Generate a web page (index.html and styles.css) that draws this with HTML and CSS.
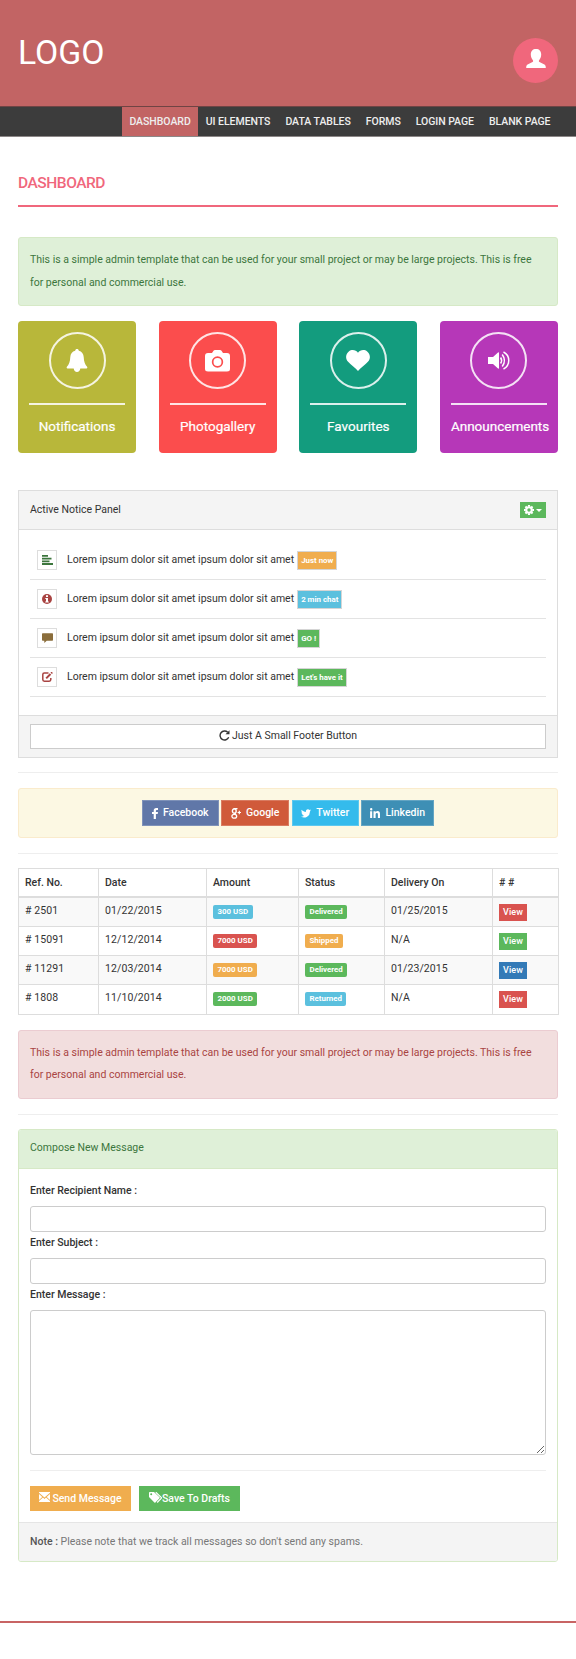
FILE: index.html
```html
<!DOCTYPE html>
<html lang="en">
<head>
<meta charset="utf-8">
<title>Dashboard</title>
<link rel="stylesheet" href="styles.css">
</head>
<body>
<header class="header">
  <a class="logo">LOGO</a>
  <a class="user"><svg viewBox="0 0 20 19" width="20" height="19"><path fill="#fff" d="M10 0c3.200 0 5.200 2 5.200 5.600 0 2.400-.9 4.300-2.100 5.600-.4.500-.3 1.500.4 1.900l4.900 2.500c1 .6 1.400 1.400 1.400 3.400H.2c0-2 .4-2.800 1.400-3.400l4.900-2.500c.7-.4.800-1.400.4-1.900-1.200-1.300-2.100-3.200-2.100-5.600C4.800 2 6.800 0 10 0z"/></svg></a>
</header>
<nav class="menu">
  <a class="menu-item active">DASHBOARD</a><a class="menu-item">UI ELEMENTS</a><a class="menu-item">DATA TABLES</a><a class="menu-item">FORMS</a><a class="menu-item">LOGIN PAGE</a><a class="menu-item">BLANK PAGE</a>
</nav>
<main class="content">
  <h4 class="page-title">DASHBOARD</h4>
  <div class="alert success">This is a simple admin template that can be used for your small project or may be large projects. This is free<br>for personal and commercial use.</div>

  <section class="cards">
    <div class="card olive"><span class="ring"><svg viewBox="0 0 22 23" width="22" height="23"><path fill="#fff" d="M11 0c1 0 1.700.7 1.800 1.700 3 .8 4.700 3 4.900 6.300.2 4.800 1.300 7.600 3.400 9.800.5.600.3 1.700-.6 1.700h-6.200C14 21.500 12.800 23 11 23s-3-1.500-3.300-3.500H1.500c-.9 0-1.100-1.100-.6-1.700C3 15.600 4.100 12.800 4.300 8c.2-3.300 1.900-5.500 4.900-6.300C9.300.7 10 0 11 0z"/></svg></span><hr><h5>Notifications</h5></div>
    <div class="card red"><span class="ring"><svg viewBox="0 0 25 22" width="25" height="22"><path fill="#fff" fill-rule="evenodd" d="M3 3h4l1.500-2.300Q9 0 10 0h5q1 0 1.500.7L18 3h4q3 0 3 3v13q0 2.500-3 2.500H3Q0 21.500 0 19V6q0-3 3-3zM12.500 6.300a5.700 5.700 0 1 0 0 11.400a5.700 5.700 0 1 0 0-11.400zm0 1.700a4 4 0 1 1 0 8a4 4 0 1 1 0-8z"/></svg></span><hr><h5>Photogallery</h5></div>
    <div class="card teal"><span class="ring"><svg viewBox="0 0 24 21" width="24" height="21"><path fill="#fff" d="M12 2.800C14-.2 18.400-.8 21.200 1.500c3.300 2.600 3.600 7.200.7 10.300C19.200 14.800 14.900 17.700 12 21 9.100 17.700 4.800 14.800 2.100 11.800-.8 8.700-.5 4.100 2.800 1.500 5.600-.8 10-.2 12 2.800z"/></svg></span><hr><h5>Favourites</h5></div>
    <div class="card purple"><span class="ring"><svg viewBox="0 0 22 19" width="22" height="19"><path fill="#fff" d="M0 6h5l5-4.500Q11 1 11 2v15q0 1-1 .5L5 13H0z"/><g fill="none" stroke="#fff" stroke-width="1.500"><path d="M12.600 6.500q2 3 0 6"/><path d="M14.200 3.500q4.500 6 0 12"/><path d="M15.500 1c7 3.500 7 13.500 0 17"/></g></svg></span><hr><h5>Announcements</h5></div>
  </section>

  <section class="panel notice">
    <div class="panel-heading">Active Notice Panel
      <button class="gear"><svg viewBox="0 0 9 9" width="10" height="10"><circle cx="4.500" cy="4.500" r="2.500" fill="none" stroke="#fff" stroke-width="1.900"/><path stroke="#fff" stroke-width="1.900" d="M4.500 0v1.500M4.500 7.500V9M0 4.500h1.500M7.500 4.500H9M1.300 1.300l1.100 1.100M6.600 6.600l1.100 1.100M1.300 7.700l1.100-1.100M6.600 2.400l1.100-1.100"/></svg><i class="caret"></i></button>
    </div>
    <ul class="notices">
      <li><span class="icon"><svg viewBox="0 0 11 10" width="11" height="10"><path fill="#3c763d" d="M0 0h6v1.800H0zM0 2.700h9.500v1.800H0zM0 5.400h7.500v1.800H0zM0 8.100h11v1.800H0z"/></svg></span><span class="text">Lorem ipsum dolor sit amet ipsum dolor sit amet</span><span class="tag orange">Just now</span></li>
      <li><span class="icon"><svg viewBox="0 0 10 10" width="10" height="10"><circle cx="5" cy="5" r="5" fill="#a94442"/><path fill="#fff" d="M4 1.300h2v1.800H4zM3.300 4.100H6v3.500h.8v1H3.200v-1H4V5.100h-.7z"/></svg></span><span class="text">Lorem ipsum dolor sit amet ipsum dolor sit amet</span><span class="tag blue">2 min chat</span></li>
      <li><span class="icon"><svg viewBox="0 0 11 10" width="11" height="10"><path fill="#8a6d3b" d="M.7.3h9.600q.7 0 .7.700v6q0 .7-.7.700H4.700L2.300 10V7.700H.7Q0 7.700 0 7V1Q0 .3.700.3z"/></svg></span><span class="text">Lorem ipsum dolor sit amet ipsum dolor sit amet</span><span class="tag green">GO !</span></li>
      <li><span class="icon"><svg viewBox="0 0 11 10" width="11" height="10"><g fill="none" stroke="#a94442"><path stroke-width="1.500" d="M6.500 1H2.300Q.8 1 .8 2.500v5Q.8 9.200 2.300 9.200h4.900Q8.800 9.200 8.800 7.500V6"/><path stroke-width="2" d="M4.200 6.400L8.500 2M9.200 1.300l1-1"/></g></svg></span><span class="text">Lorem ipsum dolor sit amet ipsum dolor sit amet</span><span class="tag green">Let's have it</span></li>
    </ul>
    <div class="panel-footer"><button class="wide"><svg viewBox="0 0 11 11" width="11" height="11"><path fill="none" stroke="#333" stroke-width="1.400" d="M8.700 2.200A4.500 4.500 0 1 0 9.700 7.300"/><path fill="#333" d="M10.500.3v4H6.500z"/></svg><span>Just A Small Footer Button</span></button></div>
  </section>

  <hr class="rule before-social">
  <div class="social">
    <a class="facebook"><svg viewBox="0 0 6 11" width="6" height="11"><path fill="#fff" d="M6 .1v1.800H4.800Q3.900 1.900 3.900 2.800V4H6l-.3 2H3.900v5H1.700V6H0V4h1.700V2.500Q1.700 0 4.200 0z"/></svg>Facebook</a>
    <a class="google"><svg viewBox="0 0 10 11" width="10" height="11"><g fill="none" stroke="#fff"><ellipse cx="3.300" cy="3" rx="1.900" ry="2.200" stroke-width="1.400"/><ellipse cx="3.300" cy="8.300" rx="2.400" ry="1.900" stroke-width="1.300"/><path stroke-width="1.200" d="M3 .6h3.500M3.600 5l1.500 1.800M6.600 4.500H10M8.300 2.800v3.400"/></g></svg>Google</a>
    <a class="twitter"><svg viewBox="0 0 24 20" width="10" height="9"><path fill="#fff" d="M24 2.400c-.9.400-1.800.7-2.800.8 1-.6 1.800-1.600 2.200-2.700-1 .6-2 1-3.100 1.200a4.900 4.900 0 0 0-8.400 4.500C7.800 6 4.200 4 1.700.9.400 3.100 1 6 3.200 7.500c-.8 0-1.600-.2-2.200-.6 0 2.300 1.600 4.400 3.900 4.900-.7.200-1.500.2-2.200.1.600 2 2.400 3.400 4.600 3.400A9.900 9.900 0 0 1 0 17.300 14 14 0 0 0 21.500 4.900c1-.7 1.800-1.600 2.500-2.500z"/></svg>Twitter</a>
    <a class="linkedin"><svg viewBox="0 0 10 10" width="10" height="10"><path fill="#fff" d="M.1 3.300h2.100V10H.1zM1.200 0a1.200 1.200 0 1 1 0 2.400a1.200 1.200 0 1 1 0-2.400zM3.500 3.300h2.100v1Q6.300 3.100 7.600 3.100 10 3.100 10 6.200V10H7.900V6.400Q7.900 5 6.900 5 5.700 5 5.600 6.400V10H3.500z"/></svg>Linkedin</a>
  </div>
  <hr class="rule tight">

  <table class="orders">
    <colgroup><col class="c1"><col class="c2"><col class="c3"><col class="c4"><col class="c5"><col class="c6"></colgroup>
    <thead><tr><th>Ref. No.</th><th>Date</th><th>Amount</th><th>Status</th><th>Delivery On</th><th># #</th></tr></thead>
    <tbody>
      <tr><td># 2501</td><td>01/22/2015</td><td><span class="label blue">300 USD</span></td><td><span class="label green">Delivered</span></td><td>01/25/2015</td><td><a class="view danger">View</a></td></tr>
      <tr><td># 15091</td><td>12/12/2014</td><td><span class="label danger">7000 USD</span></td><td><span class="label orange">Shipped</span></td><td>N/A</td><td><a class="view green">View</a></td></tr>
      <tr><td># 11291</td><td>12/03/2014</td><td><span class="label orange">7000 USD</span></td><td><span class="label green">Delivered</span></td><td>01/23/2015</td><td><a class="view primary">View</a></td></tr>
      <tr><td># 1808</td><td>11/10/2014</td><td><span class="label green">2000 USD</span></td><td><span class="label blue">Returned</span></td><td>N/A</td><td><a class="view danger">View</a></td></tr>
    </tbody>
  </table>

  <div class="alert error">This is a simple admin template that can be used for your small project or may be large projects. This is free<br>for personal and commercial use.</div>
  <hr class="rule tight">

  <section class="panel compose">
    <div class="panel-heading">Compose New Message</div>
    <div class="form">
      <label>Enter Recipient Name :</label><input type="text">
      <label>Enter Subject :</label><input type="text">
      <label>Enter Message :</label><textarea></textarea>
      <hr class="rule">
      <div class="actions">
        <a class="btn orange"><svg class="mail" viewBox="0 0 11 10" width="11" height="10"><path fill="#fff" d="M0 0h11v.8L5.500 5.600 0 .8zM0 2l3.300 3L0 8zM11 2v6L7.700 5zM4 5.600l1.500 1.300L7 5.600l4 3.500v.9H0v-.9z"/></svg>Send Message</a>
        <a class="btn green"><svg viewBox="0 0 13 11" width="13" height="11"><path fill="#fff" fill-rule="evenodd" d="M0 .8Q0 0 .8 0H5l5.500 5.300q.5.500 0 1L6.400 10.600q-.5.500-1 0L0 5zM2.200 1.200a1 1 0 1 0 0 2a1 1 0 1 0 0-2z"/><path fill="none" stroke="#fff" stroke-width="1.200" d="M6.800.2l5.400 5.200q.5.500 0 1L8.200 10.500"/></svg>Save To Drafts</a>
      </div>
    </div>
    <div class="panel-footer"><b>Note :</b> Please note that we track all messages so don't send any spams.</div>
  </section>
</main>
<footer class="footer"></footer>
</body>
</html>
```
FILE: styles.css
```css
* { box-sizing: border-box; }
body { margin: 0; background: #fff; font-family: Roboto, "Liberation Sans", sans-serif; font-size: 10.5px; line-height: 22.5px; color: #333; letter-spacing: 0; }
svg { flex: none; display: block; }
button { font: inherit; letter-spacing: inherit; color: inherit; }

.header { height: 106px; background: #c26464; display: flex; justify-content: space-between; align-items: flex-start; padding: 38px 18px 0; }
.logo { color: #fff; font-size: 33.750px; line-height: 29px; }
.user { width: 45px; height: 45px; border-radius: 50%; background: #f0677c; display: flex; justify-content: center; padding-top: 11px; }

.menu { height: 31px; background: #3c3c3c; border-top: 1px solid #6e4444; border-bottom: 1px solid #8c8787; display: flex; justify-content: flex-end; padding-right: 18px; }
.menu-item { color: #eee; font-weight: 500; padding: 0 7.500px; line-height: 29px; letter-spacing: -.04px; white-space: nowrap; }
.menu-item.active { background: #c26464; }

.content { padding: 34px 18px 0; }
.page-title { margin: 0 0 30px; height: 36px; border-bottom: 2px solid #f0677c; color: #f0677c; font-size: 15.500px; line-height: 24px; font-weight: 500; letter-spacing: -.45px; }

.alert { height: 69px; margin-bottom: 15px; padding: 11px; border: 1px solid; border-radius: 3px; white-space: nowrap; }
.success { background: #dff0d8; border-color: #d6e9c6; color: #3c763d; }
.error { background: #f2dede; border-color: #ebccd1; color: #a94442; }

.cards { display: grid; grid-template-columns: repeat(4, minmax(0, 1fr)); gap: 22.500px; margin-bottom: 37px; }
.card { height: 132px; border-radius: 4px; color: #fff; padding: 11px; display: flex; flex-direction: column; align-items: center; }
.card hr { width: 100%; margin: 14px 0 11px; border: 0; height: 2px; background: #fff; opacity: .85; }
.card h5 { width: 100%; margin: 0; font-size: 13.500px; line-height: 21px; font-weight: 400; -webkit-text-stroke: .2px #fff; text-align: center; white-space: nowrap; }
.ring { width: 57px; height: 57px; flex: none; border: 2px solid rgba(255,255,255,.85); border-radius: 50%; display: flex; align-items: center; justify-content: center; }
.olive { background: #b8b73a; }
.red { background: #fb4d4d; }
.teal { background: #139c7e; }
.purple { background: #b637b8; }

.green { background: #5cb85c; }
.orange { background: #f0ad4e; }
.blue { background: #5bc0de; }
.danger { background: #d9534f; }
.primary { background: #337ab7; }

.panel { border: 1px solid #ddd; }
.panel-heading { height: 39px; padding: 0 11px; display: flex; align-items: center; justify-content: space-between; background: #f4f4f4; border-bottom: 1px solid #ddd; }
.gear { width: 26px; height: 16px; border: 0; padding: 0; background: #5cb85c; display: flex; align-items: center; justify-content: center; gap: 2px; }
.gear svg { margin-bottom: 1px; }
.caret { border: 3px solid transparent; border-top-color: #fff; border-bottom: 0; }
.notices { list-style: none; margin: 0; padding: 11px 11px 18px; }
.notices li { height: 39px; border-bottom: 1px solid #e3e3e3; padding-left: 7px; display: flex; align-items: center; }
.icon { width: 20px; height: 20px; border: 1px solid #ddd; display: flex; align-items: center; justify-content: center; margin-right: 10px; }
.notices .text { margin-right: 3px; }
.tag { height: 19px; border: 1px solid #d5d5d5; color: #fff; font-size: 7.900px; font-weight: 700; line-height: 17px; padding: 0 3px; }
.notice .panel-footer { height: 42px; background: #f4f4f4; border-top: 1px solid #ddd; padding: 8px 11px; }
.wide { width: 100%; height: 25px; border: 1px solid #ccc; background: #fff; display: flex; justify-content: center; align-items: center; gap: 2px; }
.wide svg { margin-bottom: 2px; }

.rule { border: 0; height: 1px; background: #eee; margin: 15px 0; }
.rule.before-social { margin-top: 14px; }
.rule.tight { margin-bottom: 14px; }

.social { height: 50px; background: #fcf8e3; border: 1px solid #faebcc; border-radius: 3px; display: flex; justify-content: center; align-items: center; gap: 2.500px; }
.social a { height: 26px; color: #fff; font-weight: 500; display: flex; align-items: center; justify-content: center; gap: 5px; border: 1px solid rgba(255,255,255,.2); }
.facebook { width: 77px; background: #6077a8; }
.google { width: 68px; background: #d05a3a; }
.twitter { width: 67px; background: #34bbec; }
.linkedin { width: 73px; background: #3e8fb5; }

.orders { width: 540px; table-layout: fixed; border-collapse: collapse; margin-bottom: 15px; }
.c1 { width: 80px; }
.c2 { width: 108px; }
.c3 { width: 92px; }
.c4 { width: 86px; }
.c5 { width: 108px; }
.c6 { width: 66px; }
.orders th, .orders td { border: 1px solid #ddd; padding: 0 6px; text-align: left; vertical-align: top; }
.orders th { height: 28px; line-height: 27px; font-weight: 500; border-bottom-width: 2px; }
.orders td { height: 29.250px; line-height: 26px; letter-spacing: .1px; }
.orders tbody tr:nth-child(odd) { background: #f9f9f9; }
.label { display: block; width: max-content; height: 14px; margin-top: 7px; padding: 0 4.500px; border-radius: 2px; color: #fff; font-size: 7.900px; line-height: 14px; font-weight: 700; letter-spacing: 0; }
.view { display: block; width: 28px; height: 17px; margin-top: 6px; color: #fff; font-size: 9px; line-height: 17px; font-weight: 500; text-align: center; }

.compose { border-color: #d6e9c6; border-radius: 3px; overflow: hidden; }
.compose .panel-heading { background: #dff0d8; border-color: #d6e9c6; color: #3c763d; }
.form { padding: 11px; }
.form label { display: block; height: 26px; line-height: 22px; font-weight: 500; }
.form input, .form textarea { display: block; width: 100%; height: 26px; border: 1px solid #ccc; border-radius: 3px; background: #fff; padding: 4px 9px; }
.form textarea { height: 145px; resize: vertical; }
.actions { display: flex; gap: 8px; }
.btn { height: 25px; width: 101px; color: #fff; font-weight: 500; line-height: 25px; display: flex; align-items: center; justify-content: center; }
.btn svg { margin-bottom: 2px; }
.mail { margin-right: 2px; }
.compose .panel-footer { height: 39px; line-height: 37px; padding: 0 11px; background: #f4f4f4; border-top: 1px solid #e5e5e5; color: #777; }
.panel-footer b { font-weight: 500; color: #555; }
.footer { margin-top: 59px; border-top: 2px solid #c86464; height: 36px; }
```
